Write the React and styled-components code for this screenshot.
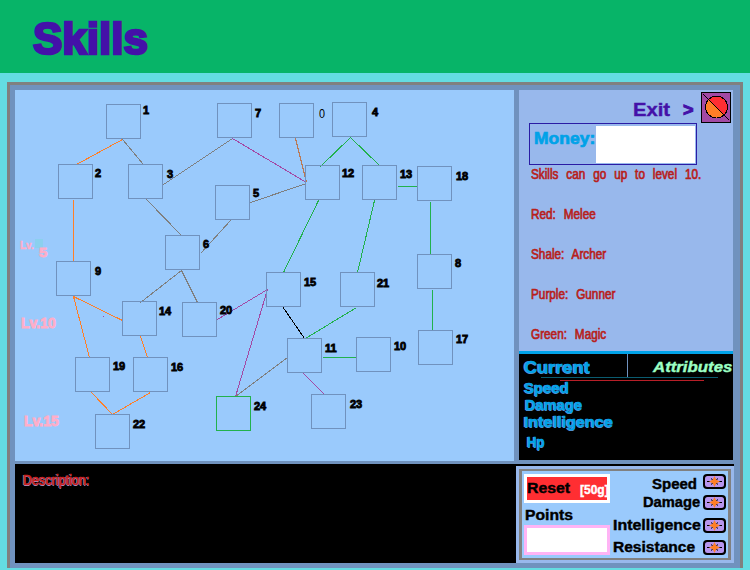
import React from "react";
import styled, { createGlobalStyle } from "styled-components";

const Global = createGlobalStyle`
  * { box-sizing: border-box; }
  body { margin: 0; background: #64dce2; font-family: "Liberation Sans", Arial, sans-serif; }
`;

const Page = styled.div`
  width: 750px;
  height: 570px;
  overflow: hidden;
  background: #64dce2;
`;

const Text = styled.span`
  display: block;
  white-space: pre;
  font-size: ${(p) => p.$size || 14}px;
  line-height: ${(p) => p.$size || 14}px;
  font-weight: ${(p) => p.$weight || 700};
  font-style: ${(p) => (p.$italic ? "italic" : "normal")};
  color: ${(p) => p.$color || "#000"};
  transform: scaleX(${(p) => p.$stretch || 1});
  transform-origin: left;
  -webkit-text-stroke: ${(p) => (p.$stroke === undefined ? 0.4 : p.$stroke)}px currentColor;
  text-shadow: ${(p) => (p.$halo ? `-1px 0 ${p.$halo}, 0 1px ${p.$halo}` : "none")};
  margin: ${(p) => p.$m || "0"};
`;

const Header = styled.header`
  height: 73px;
  background: #07b468;
  padding: 16px 0 0 33px;
`;

const Frame = styled.main`
  width: 736px;
  height: 486px;
  margin: 9px 0 0 7px;
  border: 3px solid #808080;
  border-bottom: 0;
  background: #7092be;
  padding: 5px;
`;

const TopRow = styled.div`
  display: flex;
  height: 371px;
  gap: 5px;
`;

const Tree = styled.section`
  position: relative;
  width: 499px;
  height: 371px;
  background: #9acafc;
`;

const Edges = styled.svg`
  display: block;
  shape-rendering: crispEdges;
`;

const Node = styled.div`
  position: absolute;
  left: ${(p) => p.$x - 15}px;
  top: ${(p) => p.$y - 90}px;
  width: 35px;
  height: 35px;
  border: 1px solid ${(p) => (p.$active ? "#22b14c" : "#7092be")};
`;

const Tag = styled(Text)`
  position: absolute;
  left: ${(p) => p.$x - 15}px;
  top: ${(p) => p.$base - 90 - Math.round(p.$size * 0.8465)}px;
`;

const Patch = styled.div`
  position: absolute;
  left: 20px;
  top: 149px;
  width: 8px;
  height: 9px;
  background: #8bd0ee;
`;

const Side = styled.aside`
  width: 214px;
  height: 370px;
  display: flex;
  flex-direction: column;
  overflow: hidden;
`;

const Info = styled.div`
  height: 261px;
  background: #98b8ec;
`;

const ExitRow = styled.div`
  display: grid;
  grid-template-columns: 50px 18px 30px;
  height: 33px;
  padding: 2px 0 0 114px;
`;

const MoneyBox = styled.div`
  display: flex;
  width: 168px;
  height: 42px;
  margin-left: 10px;
  border: 1px solid #2a1ca4;
`;

const MoneyLabel = styled.div`
  width: 66px;
  padding: 6px 0 0 4px;
`;

const MoneyValue = styled.div`
  width: 99px;
  height: 37px;
  margin-top: 2px;
  background: #fff;
`;

const Notes = styled.div`
  display: flex;
  flex-direction: column;
  gap: 26px;
  padding: 2px 0 0 12px;
`;

const Note = styled(Text)`
  word-spacing: 5.5px;
`;

const Attributes = styled.div`
  height: 109px;
  border-top: 3px solid #00a2e8;
  background: #000;
`;

const AttributeHead = styled.div`
  display: grid;
  grid-template-columns: 109px 105px;
  height: 23px;
`;

const HeadCell = styled.div`
  padding: ${(p) => p.$pad};
  border-right: ${(p) => (p.$divided ? "1px solid #7092be" : "0")};
`;

const Rule = styled.div`
  width: ${(p) => p.$w}px;
  height: 1px;
  margin: ${(p) => p.$m};
  background: ${(p) => p.$color};
`;

const BottomRow = styled.div`
  display: flex;
  justify-content: space-between;
  align-items: flex-end;
  width: 719px;
  height: 99px;
  margin-top: 3px;
  background: #000;
`;

const Description = styled.section`
  align-self: flex-start;
  padding: 9px 0 0 8px;
`;

const Upgrade = styled.section`
  width: 218px;
  height: 97px;
  padding: 3px;
  background: #98b8ec;
`;

const UpgradeInner = styled.div`
  display: grid;
  grid-template-columns: 86px 116px;
  height: 91px;
  padding: 3px 0 0 2px;
  border: solid #808080;
  border-width: 2px 3px;
  background: #9acafc;
`;

const Reset = styled.div`
  display: grid;
  grid-template-columns: 53px 27px;
  width: 86px;
  height: 29px;
  border: 3px solid #fff;
  background: #ff2e32;
  overflow: hidden;
`;

const PointsValue = styled.div`
  width: 86px;
  height: 30px;
  border: 3px solid #ffb4f5;
  background: #fff;
`;

const Rows = styled.div`
  display: grid;
  grid-template-rows: 21px 23px 22px 15px;
`;

const StatRow = styled.div`
  display: grid;
  grid-template-columns: 93px 23px;
  align-items: start;
`;

const nodes = [
  [1, 106, 104, 143, 114], [7, 217, 103, 255, 117], [4, 332, 102, 372, 116],
  [2, 58, 164, 95, 177], [3, 128, 164, 167, 178], [12, 305, 165, 342, 177],
  [13, 362, 165, 400, 178], [18, 417, 166, 456, 180], [5, 215, 185, 253, 197],
  [6, 165, 235, 203, 248], [9, 56, 261, 95, 275], [14, 122, 301, 159, 315],
  [20, 182, 302, 220, 314], [15, 266, 272, 304, 286], [21, 340, 272, 377, 287],
  [8, 417, 254, 455, 267], [17, 418, 330, 456, 343], [11, 287, 338, 325, 352],
  [10, 356, 337, 394, 350], [19, 75, 357, 113, 370], [16, 133, 357, 171, 371],
  [22, 95, 414, 133, 428], [24, 216, 396, 254, 410], [23, 311, 394, 350, 408],
];

const orange = "#ff7f27", gray = "#7f7f7f", green = "#22b14c", purple = "#a349a4";

const edges = [
  [122, 139, 76, 164, orange], [122, 139, 143, 164, gray],
  [232, 138, 163, 184, gray], [232, 138, 306, 182, purple],
  [295, 138, 306, 182, "#b97a57"], [350, 137, 320, 166, green],
  [350, 137, 379, 165, green], [250, 202, 306, 183, gray],
  [397, 186, 417, 186, green], [73, 199, 73, 261, orange],
  [146, 199, 181, 235, gray], [230, 220, 200, 253, gray],
  [181, 270, 140, 302, gray], [181, 270, 197, 302, gray],
  [73, 296, 122, 320, orange], [73, 296, 89, 357, orange],
  [140, 336, 147, 357, orange], [91, 392, 112, 414, orange],
  [150, 392, 112, 414, orange], [217, 319, 267, 289, purple],
  [267, 289, 235, 396, purple], [235, 396, 287, 357, gray],
  [303, 373, 324, 394, purple], [282, 306, 304, 338, "#000"],
  [356, 307, 305, 338, green], [322, 357, 356, 357, green],
  [318, 200, 283, 272, green], [374, 200, 357, 272, green],
  [430, 201, 430, 254, green], [432, 289, 432, 330, green],
  [102, 316, 103, 316, purple],
];

const notes = ["Skills can go up to level 10.", "Red: Melee", "Shale: Archer", "Purple: Gunner", "Green: Magic"];

const attributes = [
  ["Speed", 1.07, "0 0 3px 5px"],
  ["Damage", 1.05, "0 0 3px 6px"],
  ["Intelligence", 1.155, "0 0 6px 5px"],
  ["Hp", 0.95, "0 0 0 8px"],
];

const stats = [
  ["Speed", 1.07, "3px 0 0 42px"],
  ["Damage", 1.05, "0 0 0 33px"],
  ["Intelligence", 1.14, "0 0 0 3px"],
  ["Resistance", 1.11, "0 0 0 3px"],
];

function ExitIcon() {
  return (
    <svg width="30" height="31" viewBox="0 0 30 31" shapeRendering="crispEdges">
      <rect x="0.5" y="0.5" width="29" height="30" fill="#a349a4" stroke="#000" />
      <circle cx="15.5" cy="15" r="11" fill="#ff2e32" />
      <path d="M7.5 7.3A11 11 0 0 0 23.4 22.7Z" fill="#ff7f27" />
      <circle cx="15.5" cy="15" r="11" fill="none" stroke="#000" />
      <path d="M2 2L28 28" stroke="#000" />
    </svg>
  );
}

function PlusIcon() {
  return (
    <svg width="23" height="15" viewBox="0 0 23 15">
      <rect width="23" height="15" rx="4" fill="#000" />
      <rect x="2" y="2" width="19" height="11" rx="2.5" fill="#b795ee" />
      <path d="M4 7.5H19M8 4.5L15 10.5M15 4.5L8 10.5" stroke="#000" />
      <path d="M11.5 2L13.3 5.7L17 7.5L13.3 9.3L11.5 13L9.7 9.3L6 7.5L9.7 5.7Z" fill="#ff7f27" />
    </svg>
  );
}

export default function App() {
  return (
    <Page>
      <Global />
      <Header>
        <Text as="h1" $size={44} $color="#4411a8" $stroke={2.6} $m="1px 0 0">Skills</Text>
      </Header>
      <Frame>
        <TopRow>
          <Tree>
            <Edges width="499" height="371" viewBox="15 90 499 371">
              {edges.map(([x1, y1, x2, y2, c], i) => (
                <line key={i} x1={x1 + 0.5} y1={y1 + 0.5} x2={x2 + 0.5} y2={y2 + 0.5} stroke={c} />
              ))}
            </Edges>
            <Node $x={279} $y={103} />
            <Tag $x={319} $base={118} $size={12} $weight={400} $stretch={0.9} $stroke={0}>0</Tag>
            {nodes.map(([n, x, y, tx, base]) => (
              <React.Fragment key={n}>
                <Node $x={x} $y={y} $active={n === 24} />
                <Tag $x={tx} $base={base} $size={10} $stretch={1.1} $stroke={0.8}>{n}</Tag>
              </React.Fragment>
            ))}
            <Patch />
            <Tag $x={20} $base={249} $size={10} $color="#ffaec9">Lv.</Tag>
            <Tag $x={39} $base={257} $size={13} $color="#ffaec9" $stretch={1.15} $stroke={0.8}>5</Tag>
            <Tag $x={21} $base={328} $size={14} $color="#ffaec9" $stroke={0.9}>Lv.10</Tag>
            <Tag $x={24} $base={426} $size={14} $color="#ffaec9" $stroke={0.9}>Lv.15</Tag>
          </Tree>
          <Side>
            <Info>
              <ExitRow>
                <Text $size={18} $color="#4411a8" $stretch={1.12} $m="9px 0 0">Exit</Text>
                <Text $size={18} $color="#4411a8" $stroke={1} $m="9px 0 0">&gt;</Text>
                <ExitIcon />
              </ExitRow>
              <MoneyBox>
                <MoneyLabel><Text $size={17} $color="#00a2e8" $stretch={1.03} $stroke={0.7}>Money:</Text></MoneyLabel>
                <MoneyValue />
              </MoneyBox>
              <Notes>
                {notes.map((n) => (
                  <Note key={n} $weight={400} $color="#b81f1c" $stretch={0.84} $stroke={0.7}>{n}</Note>
                ))}
              </Notes>
            </Info>
            <Attributes>
              <AttributeHead>
                <HeadCell $divided $pad="6px 0 0 5px">
                  <Text $size={16} $color="#00a2e8" $halo="#5b8fd0" $stretch={1.14}>Current</Text>
                </HeadCell>
                <HeadCell $pad="5px 0 0 25px">
                  <Text $size={15} $italic $color="#9cffc4" $stretch={1.12}>Attributes</Text>
                </HeadCell>
              </AttributeHead>
              <Rule $w={177} $color="#0a5c70" $m="0 0 2px 22px" />
              <Rule $w={144} $color="#b81f28" $m="0 0 0 41px" />
              {attributes.map(([t, s, m]) => (
                <Text key={t} $color="#00a2e8" $halo="#5b8fd0" $stretch={s} $m={m}>{t}</Text>
              ))}
            </Attributes>
          </Side>
        </TopRow>
        <BottomRow>
          <Description>
            <Text $weight={400} $color="#c8201e" $halo="#a9a0dc" $stretch={0.9} $stroke={0.6}>Description:</Text>
          </Description>
          <Upgrade>
            <UpgradeInner>
              <div>
                <Reset>
                  <Text $stretch={1.13} $m="4px 0 0">Reset</Text>
                  <Text $size={12} $color="#fff" $m="7px 0 0">[50g]</Text>
                </Reset>
                <Text $stretch={1.12} $m="5px 0 3px 1px">Points</Text>
                <PointsValue />
              </div>
              <Rows>
                {stats.map(([t, s, m]) => (
                  <StatRow key={t}>
                    <Text $stretch={s} $m={m}>{t}</Text>
                    <PlusIcon />
                  </StatRow>
                ))}
              </Rows>
            </UpgradeInner>
          </Upgrade>
        </BottomRow>
      </Frame>
    </Page>
  );
}
